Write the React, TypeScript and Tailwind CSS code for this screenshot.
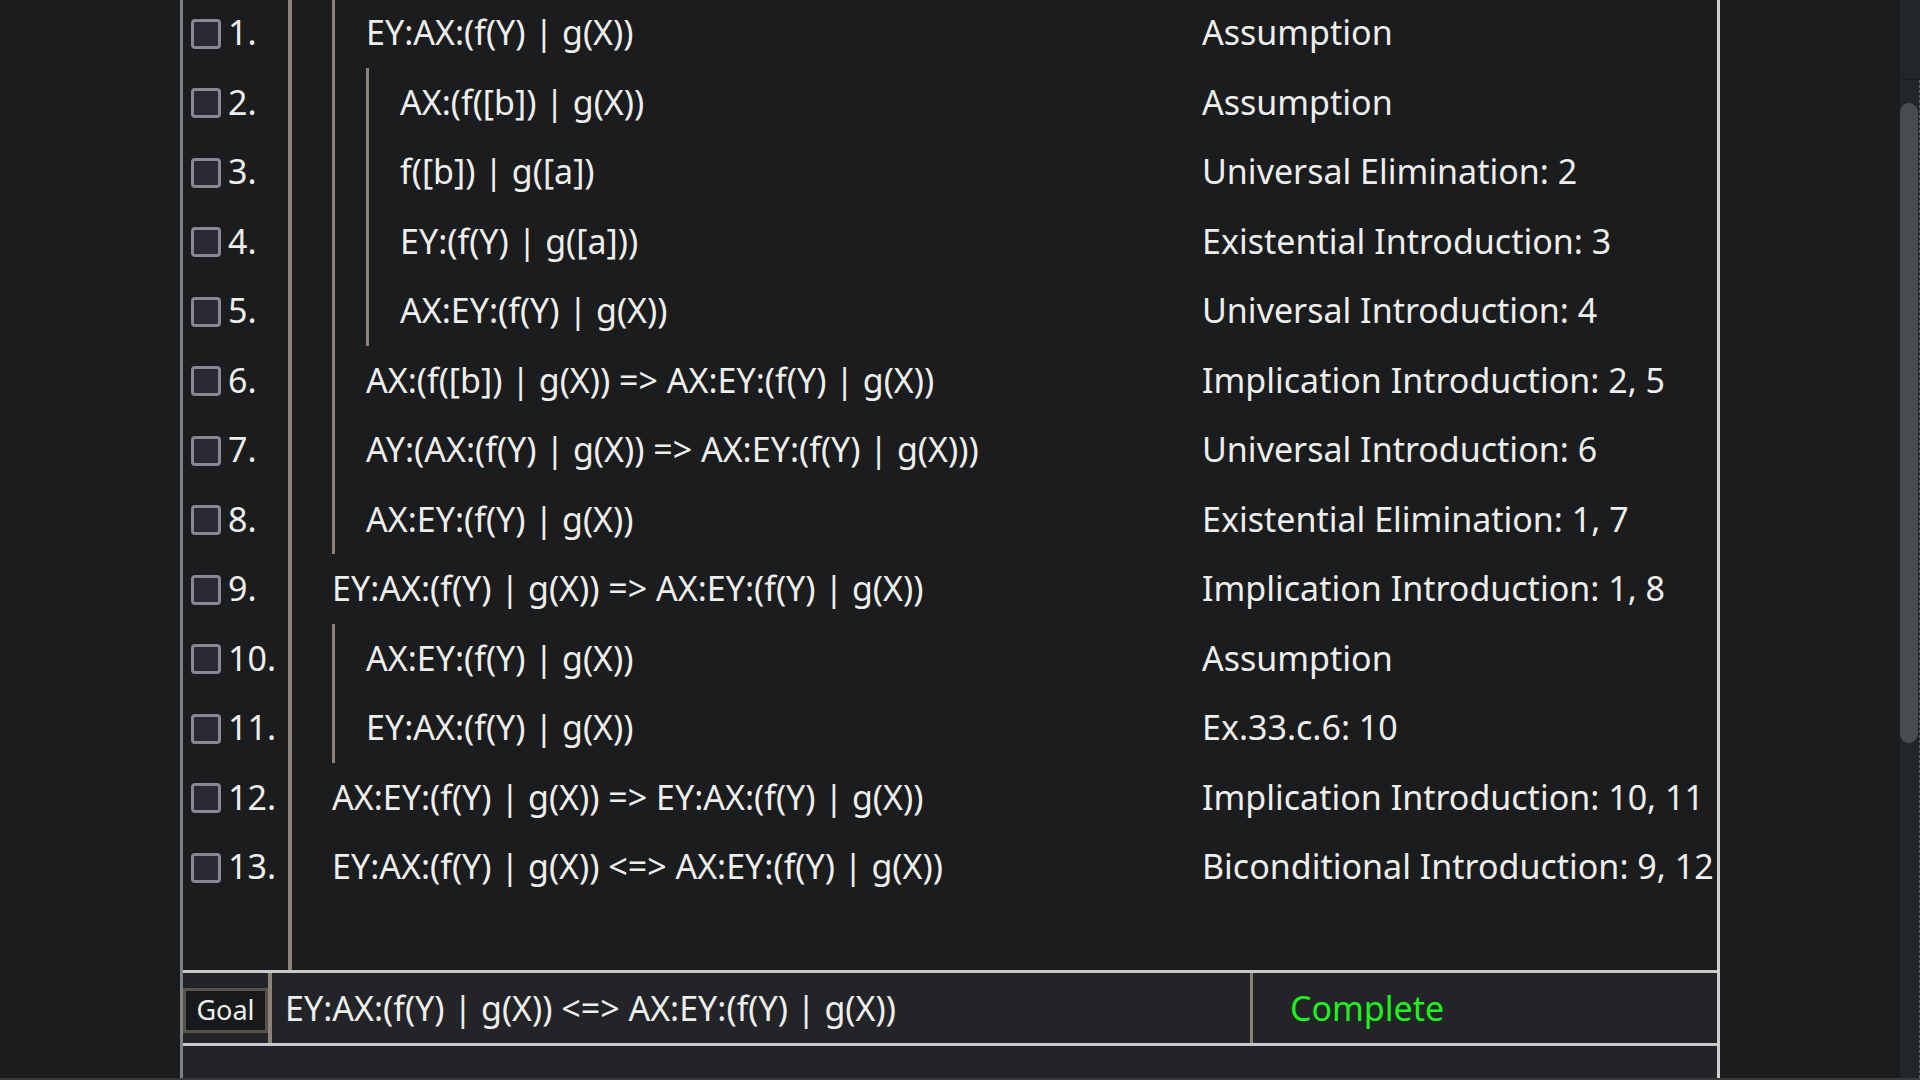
import React from 'react';

interface Step {
  n: number;
  depth: number;
  formula: string;
  rule: string;
}

const steps: Step[] = [
  { n: 1, depth: 1, formula: 'EY:AX:(f(Y) | g(X))', rule: 'Assumption' },
  { n: 2, depth: 2, formula: 'AX:(f([b]) | g(X))', rule: 'Assumption' },
  { n: 3, depth: 2, formula: 'f([b]) | g([a])', rule: 'Universal Elimination: 2' },
  { n: 4, depth: 2, formula: 'EY:(f(Y) | g([a]))', rule: 'Existential Introduction: 3' },
  { n: 5, depth: 2, formula: 'AX:EY:(f(Y) | g(X))', rule: 'Universal Introduction: 4' },
  { n: 6, depth: 1, formula: 'AX:(f([b]) | g(X)) => AX:EY:(f(Y) | g(X))', rule: 'Implication Introduction: 2, 5' },
  { n: 7, depth: 1, formula: 'AY:(AX:(f(Y) | g(X)) => AX:EY:(f(Y) | g(X)))', rule: 'Universal Introduction: 6' },
  { n: 8, depth: 1, formula: 'AX:EY:(f(Y) | g(X))', rule: 'Existential Elimination: 1, 7' },
  { n: 9, depth: 0, formula: 'EY:AX:(f(Y) | g(X)) => AX:EY:(f(Y) | g(X))', rule: 'Implication Introduction: 1, 8' },
  { n: 10, depth: 1, formula: 'AX:EY:(f(Y) | g(X))', rule: 'Assumption' },
  { n: 11, depth: 1, formula: 'EY:AX:(f(Y) | g(X))', rule: 'Ex.33.c.6: 10' },
  { n: 12, depth: 0, formula: 'AX:EY:(f(Y) | g(X)) => EY:AX:(f(Y) | g(X))', rule: 'Implication Introduction: 10, 11' },
  { n: 13, depth: 0, formula: 'EY:AX:(f(Y) | g(X)) <=> AX:EY:(f(Y) | g(X))', rule: 'Biconditional Introduction: 9, 12' },
];

const ProofRow = ({ step }: { step: Step }) => (
  <div className="flex h-[69.5px] shrink-0">
    <div className="w-[109px] flex items-center pl-[8px] gap-[7px] border-r-[4px] border-[#8b8378]">
      <span className="w-[30px] h-[30px] mt-[2px] rounded-[4px] border-[3px] border-[#8a8794] bg-[#2a2933] shrink-0" />
      <span>{step.n}.</span>
    </div>
    <div className="w-[910px] flex items-stretch pl-[40px]">
      {[...Array(step.depth)].map((_, i) => (
        <div key={i} className="w-[3px] mr-[31px] bg-[#8b8378] shrink-0" />
      ))}
      <span className="self-center whitespace-nowrap">{step.formula}</span>
    </div>
    <div className="flex-1 flex items-center whitespace-nowrap">{step.rule}</div>
  </div>
);

export default function App() {
  return (
    <div
      className="h-[1080px] w-full flex bg-[#1b1c1e] border-b-2 border-[#393a3c] overflow-hidden text-[34px] text-[#eeeeec]"
      style={{ fontFamily: '"Noto Sans", "Open Sans", sans-serif' }}
    >
      <div className="w-[180px] shrink-0" />
      <div className="w-[1540px] shrink-0 flex flex-col border-l-[3px] border-r-[3px] border-l-[#7d8286] border-r-[#cfcfcf]">
        <div className="flex-1 flex flex-col overflow-hidden">
          <div className="flex flex-col -mt-[2px] flex-1">
            {steps.map((s) => (
              <ProofRow key={s.n} step={s} />
            ))}
            <div className="flex flex-1">
              <div className="w-[109px] border-r-[4px] border-[#8b8378]" />
            </div>
          </div>
        </div>
        <div className="h-[76px] shrink-0 flex bg-[#232427] border-y-[3px] border-[#c8c8c8]">
          <div className="w-[89px] flex items-center pt-[5px] border-r-[4px] border-[#8b8378]">
            <div className="w-[85px] h-[45px] flex items-center justify-center border-[3px] border-[#595249] bg-[#18191b] text-[27px]">
              Goal
            </div>
          </div>
          <div className="w-[981px] flex items-center pl-[13px] whitespace-nowrap border-r-[3px] border-[#8b8378]">
            EY:AX:(f(Y) | g(X)) &lt;=&gt; AX:EY:(f(Y) | g(X))
          </div>
          <div className="flex-1 flex items-center pl-[37px] text-[#1ff21f]">Complete</div>
        </div>
        <div className="h-[32px] shrink-0 bg-[#222326]" />
      </div>
      <div className="flex-1" />
      <div className="w-[20px] shrink-0 flex flex-col bg-[#232629]">
        <div className="h-[80px] border-b border-[#1a1b1d]" />
        <div className="flex-1 flex border-r border-dashed border-[#5a5f63]">
          <div className="w-[18px] mt-[23px] h-[640px] rounded-t-full rounded-b-full bg-[#474c50]" />
        </div>
      </div>
    </div>
  );
}
